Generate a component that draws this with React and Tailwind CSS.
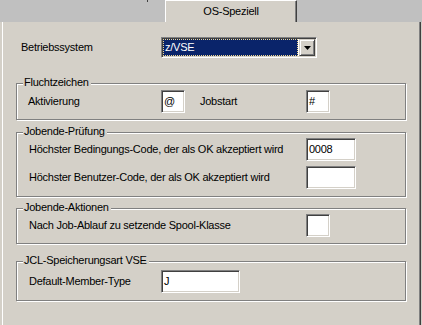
import React from "react";

// Windows-classic sunken edit field
function Edit({ value, width }) {
  return (
    <div
      className={`h-[23px] bg-white border border-t-[#808080] border-l-[#808080] border-b-white border-r-white shadow-[inset_1px_1px_0_#404040,inset_-1px_-1px_0_#d4d0c8] pl-[2px] pt-[3px] leading-[14px] ${width}`}
    >
      {value}
    </div>
  );
}

function Group({ title, className, children }) {
  return (
    <div
      className={`relative w-[390px] border border-[#808080] shadow-[inset_1px_1px_0_#fff,1px_1px_0_#fff] ${className}`}
    >
      <span className="absolute left-[6px] top-[-9px] h-[14px] leading-[14px] bg-[#d4d0c8] pl-[1px] pr-[2px]">
        {title}
      </span>
      {children}
    </div>
  );
}

export default function App() {
  return (
    <div
      className="w-[422px] h-[325px] bg-[#d4d0c8] text-black text-[11px] tracking-[-0.25px] flex flex-col overflow-hidden"
      style={{ fontFamily: '"Liberation Sans", Arial, sans-serif' }}
    >
      {/* Reiterleiste */}
      <div className="relative h-[22px] bg-[#c0c0c0] flex shrink-0">
        <div className="w-[147px]" />
        <div className="w-[1px] h-[2px] bg-[#404040]" />
        <div className="w-[17px]" />
        <div className="w-[132px] h-[22px] bg-[#d4d0c8] border-t border-l border-white border-r border-r-[#404040] shadow-[inset_-1px_0_0_#808080] flex items-center justify-center">
          OS-Speziell
        </div>
      </div>

      {/* Seite */}
      <div className="flex-1 ml-[2px] mr-[1px] border-l border-white border-r border-r-[#404040] shadow-[inset_-1px_0_0_#808080] pl-[13px]">
        <div className="mt-[15px] h-[21px] flex items-center">
          <span className="ml-[5px] w-[140px]">Betriebssystem</span>
          <div className="w-[156px] h-[21px] flex bg-white border border-t-[#808080] border-l-[#808080] border-b-white border-r-white shadow-[inset_1px_1px_0_#404040,inset_-1px_-1px_0_#d4d0c8] p-[1px]">
            <div className="flex-1 bg-[#0a246a] text-white border border-dotted border-[#f0d890] leading-[15px] pl-[1px] mr-[1px]">
              z/VSE
            </div>
            <div className="w-[16px] h-[17px] bg-[#d4d0c8] border border-t-[#d4d0c8] border-l-[#d4d0c8] border-b-[#404040] border-r-[#404040] shadow-[inset_1px_1px_0_#fff,inset_-1px_-1px_0_#808080] flex items-center justify-center">
              <svg width="7" height="4" viewBox="0 0 7 4">
                <path d="M0 0h7L3.5 4z" fill="#000" />
              </svg>
            </div>
          </div>
        </div>

        <Group title="Fluchtzeichen" className="mt-[25px] h-[37px]">
          <div className="pt-[6px] pl-[11px] flex items-center">
            <span className="w-[133px]">Aktivierung</span>
            <Edit value="@" width="w-[24px]" />
            <span className="ml-[15px] w-[106px]">Jobstart</span>
            <Edit value="#" width="w-[24px]" />
          </div>
        </Group>

        <Group title="Jobende-Prüfung" className="mt-[12px] h-[65px]">
          <div className="pt-[5px] pl-[12px] flex flex-col gap-[5px]">
            <div className="flex items-center">
              <span className="w-[277px]">Höchster Bedingungs-Code, der als OK akzeptiert wird</span>
              <Edit value="0008" width="w-[50px]" />
            </div>
            <div className="flex items-center">
              <span className="w-[277px]">Höchster Benutzer-Code, der als OK akzeptiert wird</span>
              <Edit value="" width="w-[50px]" />
            </div>
          </div>
        </Group>

        <Group title="Jobende-Aktionen" className="mt-[11px] h-[36px]">
          <div className="pt-[5px] pl-[12px] flex items-center">
            <span className="w-[277px]">Nach Job-Ablauf zu setzende Spool-Klasse</span>
            <Edit value="" width="w-[24px]" />
          </div>
        </Group>

        <Group title="JCL-Speicherungsart VSE" className="mt-[17px] h-[40px]">
          <div className="pt-[8px] pl-[12px] flex items-center">
            <span className="w-[132px]">Default-Member-Type</span>
            <Edit value="J" width="w-[79px]" />
          </div>
        </Group>
      </div>
    </div>
  );
}
